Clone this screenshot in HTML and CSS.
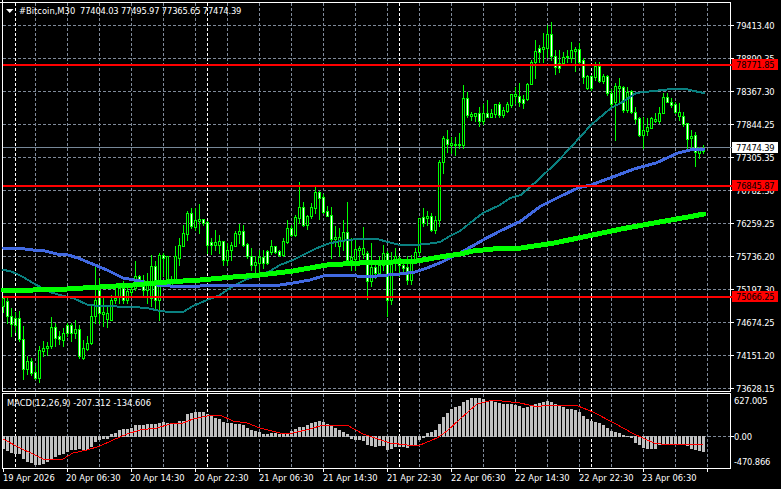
FILE: index.html
```html
<!DOCTYPE html>
<html lang="en">
<head>
<meta charset="utf-8">
<title>#Bitcoin,M30</title>
<link rel="stylesheet" href="styles.css">
</head>
<body>
<svg class="chart" width="781" height="489" viewBox="0 0 781 489" xmlns="http://www.w3.org/2000/svg">
  <g id="grid"></g>
  <path class="frame" d="M2.5 0V391.5H730.5V2.5H0M2.5 393.5H730.5V468.5H2.5Z"/>
  <path id="ticks" class="frame"></path>
  <g id="hist"></g>
  <polyline id="signal" class="signal"></polyline>
  <path class="last" d="M3 147.5H732"/>
  <g id="candles"></g>
  <polyline id="maTeal" class="ma teal"></polyline>
  <polyline id="maBlue" class="ma blue"></polyline>
  <polyline id="maLime" class="ma lime"></polyline>

  <g class="axis num">
    <text x="736" y="29">79413.40</text>
    <text x="736" y="62">78890.35</text>
    <text x="736" y="95">78367.30</text>
    <text x="736" y="128">77844.25</text>
    <text x="736" y="161">77305.35</text>
    <text x="736" y="194">76782.30</text>
    <text x="736" y="227">76259.25</text>
    <text x="736" y="260">75736.20</text>
    <text x="736" y="293">75197.30</text>
    <text x="736" y="326">74674.25</text>
    <text x="736" y="359">74151.20</text>
    <text x="736" y="392">73628.15</text>
    <text x="734" y="404">627.005</text>
    <text x="734" y="440">0.00</text>
    <text x="734" y="465">-470.866</text>
  </g>

  <path class="level" d="M3 65H732M3 186H732M3 297H732"/>
  <rect class="tag-red" x="732" y="59" width="46" height="11"/>
  <rect class="tag-red" x="732" y="180" width="46" height="11"/>
  <rect class="tag-red" x="732" y="291" width="46" height="11"/>
  <rect class="tag-white" x="732" y="142" width="46" height="11"/>
  <g class="tag-text num">
    <text x="736" y="68">78771.85</text>
    <text x="736" y="189">76845.87</text>
    <text x="736" y="300">75066.25</text>
    <text x="736" y="151">77474.39</text>
  </g>

  <g class="axis">
    <text x="3" y="481">19 Apr 2026</text>
    <text x="66" y="481">20 Apr 06:30</text>
    <text x="130" y="481">20 Apr 14:30</text>
    <text x="194" y="481">20 Apr 22:30</text>
    <text x="259" y="481">21 Apr 06:30</text>
    <text x="323" y="481">21 Apr 14:30</text>
    <text x="387" y="481">21 Apr 22:30</text>
    <text x="451" y="481">22 Apr 06:30</text>
    <text x="515" y="481">22 Apr 14:30</text>
    <text x="579" y="481">22 Apr 22:30</text>
    <text x="642" y="481">23 Apr 06:30</text>
    <text x="7" y="406">MACD(12,26,9) -207.312 -134.606</text>
    <text x="19" y="14">#Bitcoin,M30</text>
  </g>
  <g class="axis num">
    <text x="80" y="14">77404.03 77495.97 77365.65 77474.39</text>
  </g>
  <path class="arrow" d="M6 9H13.5L9.75 13Z"/>
</svg>
<script src="chart.js"></script>
</body>
</html>
```
FILE: styles.css
```css
html, body {
  margin: 0;
  padding: 0;
  background: #000;
}
.chart {
  display: block;
  background: #000;
}
.frame {
  fill: none;
  stroke: #fff;
  stroke-width: 1;
  shape-rendering: crispEdges;
}
.grid-line {
  stroke: #7f8a99;
  stroke-width: 1;
  stroke-dasharray: 3 2;
  shape-rendering: crispEdges;
}
.sep-line {
  stroke: #fff;
  stroke-width: 1;
  stroke-dasharray: 3 2;
  shape-rendering: crispEdges;
}
.bar { fill: #c0c0c0; shape-rendering: crispEdges; }
.signal { fill: none; stroke: #f00; stroke-width: 1; shape-rendering: crispEdges; }
.last { stroke: #778899; stroke-width: 1; shape-rendering: crispEdges; }
.wick, .body { fill: #0f0; shape-rendering: crispEdges; }
.in-white { fill: #fff; shape-rendering: crispEdges; }
.in-black { fill: #000; shape-rendering: crispEdges; }
.ma { fill: none; stroke-linecap: round; stroke-linejoin: round; shape-rendering: crispEdges; }
.teal { stroke: #0a8080; stroke-width: 2; }
.blue { stroke: #4169e1; stroke-width: 3; }
.lime { stroke: #0f0; stroke-width: 5; }
.level { stroke: #f00; stroke-width: 2; shape-rendering: crispEdges; fill: none; }
.tag-red { fill: #f00; shape-rendering: crispEdges; }
.tag-white { fill: #fff; shape-rendering: crispEdges; }
.axis text, .tag-text text {
  font-family: "DejaVu Sans Condensed", "DejaVu Sans", sans-serif;
  font-size: 9.3px;
}
.num text { letter-spacing: -0.18px; }
.axis text { fill: #fff; }
.tag-text text { fill: #000; }
.arrow { fill: #fff; }
```
FILE: chart.js
```js
var NS = "http://www.w3.org/2000/svg";
function el(parent, name, attrs) {
  var n = document.createElementNS(NS, name);
  for (var k in attrs) n.setAttribute(k, attrs[k]);
  parent.appendChild(n);
  return n;
}

/* grid */
var grid = document.getElementById("grid");
for (var y = 25; y <= 388; y += 33) el(grid, "line", {class: "grid-line", x1: 3, x2: 730, y1: y + 0.5, y2: y + 0.5});
el(grid, "line", {class: "grid-line", x1: 3, x2: 730, y1: 436.5, y2: 436.5});
for (var x = 35; x < 730; x += 32) {
  el(grid, "line", {class: "grid-line", x1: x + 0.5, x2: x + 0.5, y1: 3, y2: 391});
  el(grid, "line", {class: "grid-line", x1: x + 0.5, x2: x + 0.5, y1: 394, y2: 468});
}
[15, 207, 399, 591].forEach(function (x) {
  el(grid, "line", {class: "sep-line", x1: x + 0.5, x2: x + 0.5, y1: 3, y2: 391});
  el(grid, "line", {class: "sep-line", x1: x + 0.5, x2: x + 0.5, y1: 394, y2: 468});
});

/* ticks */
var t = "";
for (var x = 3; x < 730; x += 64) t += "M" + (x + 0.5) + " 468V472";
for (var y = 25; y <= 388; y += 33) t += "M731 " + (y + 0.5) + "H734";
t += "M731 436.5H734";
document.getElementById("ticks").setAttribute("d", t);

/* candles: high, body top, body bottom, low, 1 = white body */
var C = [
[296,298,306,312,0],[298,301,316,323,1],[308,316,324,336,1],[312,318,325,332,1],[311,318,339,341,1],
[326,339,369,379,1],[356,361,369,374,0],[358,361,373,375,1],[366,372,378,379,1],[346,350,378,382,0],
[341,348,351,356,0],[342,346,348,355,0],[317,327,346,348,0],[323,327,338,346,1],[331,336,339,344,1],
[328,333,340,346,0],[323,325,333,336,1],[323,325,333,341,1],[320,329,333,338,0],[325,329,356,358,1],
[340,348,358,359,0],[336,343,349,350,0],[306,316,343,344,0],[266,300,316,323,0],[278,290,313,323,1],
[296,312,314,326,0],[305,313,319,327,0],[295,300,320,320,0],[288,298,300,303,0],[283,288,296,303,0],
[281,288,300,303,1],[285,291,300,303,0],[283,289,292,296,0],[261,276,288,290,0],[275,276,281,285,1],
[275,280,290,296,1],[273,283,290,303,0],[255,266,298,306,0],[261,266,300,308,1],[253,255,300,320,0],
[253,255,258,276,1],[256,256,280,283,0],[276,280,285,287,0],[246,256,280,283,0],[238,245,258,265,0],
[225,233,246,246,0],[211,213,234,240,0],[208,213,226,228,1],[208,220,227,230,0],[204,219,221,233,0],
[219,219,223,225,1],[221,222,245,253,1],[238,242,245,254,1],[230,242,245,250,0],[235,241,245,253,0],
[241,241,260,265,1],[243,250,260,265,0],[242,245,250,260,0],[231,233,246,246,0],[224,231,234,243,0],
[225,231,245,246,1],[243,244,256,258,1],[248,256,265,270,1],[256,262,265,273,0],[250,257,263,273,0],
[250,257,263,268,1],[250,251,263,264,1],[240,246,252,254,0],[246,246,252,253,1],[250,251,255,256,1],
[238,241,255,256,0],[220,228,242,243,0],[225,228,235,236,1],[215,217,235,236,0],[182,207,218,223,0],
[202,207,225,226,1],[215,216,225,229,0],[203,207,216,218,0],[187,192,208,213,0],[191,192,198,219,1],
[194,197,212,213,1],[206,211,216,216,1],[207,215,239,258,1],[226,237,239,246,0],[228,237,246,256,0],
[220,232,241,250,0],[202,232,260,261,1],[238,257,260,270,0],[238,249,259,270,0],[246,248,250,263,0],
[227,248,254,258,0],[251,253,281,299,1],[243,267,281,286,0],[263,267,273,278,1],[256,265,273,275,0],
[245,253,265,270,0],[251,253,300,316,1],[252,260,300,304,0],[248,256,260,270,0],[256,258,265,276,1],
[261,265,268,271,1],[256,267,280,284,1],[255,260,280,284,0],[248,252,260,261,0],[218,218,252,255,0],
[208,217,223,226,1],[211,216,218,225,0],[213,216,230,231,1],[216,220,230,233,0],[160,162,220,226,0],
[136,138,162,173,0],[130,139,144,152,1],[137,143,145,153,0],[137,144,145,155,0],[133,144,145,148,0],
[85,98,145,148,0],[92,98,115,117,1],[112,114,116,120,0],[113,113,116,121,0],[107,113,121,126,1],
[104,113,121,124,0],[100,113,117,117,1],[109,113,117,117,0],[104,104,114,117,0],[102,104,115,117,1],
[107,110,115,117,0],[102,104,111,112,0],[94,94,105,107,0],[87,94,96,103,0],[83,96,102,106,1],
[95,99,103,108,1],[83,84,99,100,0],[60,62,84,84,0],[40,51,62,78,0],[45,48,52,62,1],
[33,47,49,62,0],[25,34,48,57,0],[22,34,56,60,1],[50,56,67,74,1],[50,63,68,72,1],
[52,57,63,65,0],[50,56,57,62,0],[42,50,58,62,0],[47,49,51,71,0],[43,49,62,63,1],
[58,60,77,83,1],[75,76,88,89,0],[75,76,88,90,1],[62,66,77,80,0],[62,66,81,82,1],
[74,76,81,83,0],[75,76,93,95,1],[89,93,104,106,1],[83,86,102,140,0],[78,86,88,102,0],
[86,87,110,112,1],[87,92,110,112,0],[90,91,112,113,1],[107,112,119,123,1],[117,118,135,136,1],
[117,130,135,148,0],[118,127,131,135,0],[117,118,128,128,0],[113,119,121,122,0],[107,113,121,123,0],
[93,97,113,113,0],[93,97,102,102,1],[98,102,105,107,1],[102,104,112,113,1],[103,112,116,120,0],
[112,116,124,126,1],[123,123,139,150,1],[130,136,138,150,0],[132,135,152,166,1],[147,150,153,158,0],
[145,148,151,153,0]
];
var g = document.getElementById("candles");
C.forEach(function (c, i) {
  var x = 3 + 4 * i;
  el(g, "rect", {class: "wick", x: x, y: c[0], width: 1, height: c[3] - c[0] + 1});
  el(g, "rect", {class: "body", x: x - 1, y: c[1], width: 3, height: c[2] - c[1] + 1});
  if (c[2] - c[1] > 1) el(g, "rect", {class: c[4] ? "in-white" : "in-black", x: x, y: c[1] + 1, width: 1, height: c[2] - c[1] - 1});
});

/* MACD histogram: far end of each bar, zero at y=436 */
var H = [
448,450,452,453,453,458,461,462,464,464,463,461,459,456,454,453,451,449,449,448,449,449,446,441,439,438,438,
434,433,430,429,429,428,425,425,425,424,424,424,423,422,423,423,423,421,421,414,413,412,412,412,414,415,418,
419,422,423,423,424,424,425,428,430,431,432,
434,434,433,433,434,433,433,431,429,427,427,425,423,422,421,422,424,425,428,430,432,434,
438,439,439,440,444,445,446,445,445,449,448,446,446,446,447,445,444,439,437,
433,432,430,424,417,413,409,407,406,402,400,398,398,398,399,401,401,402,403,404,404,404,405,406,
408,407,406,404,403,402,401,402,404,406,407,409,409,410,412,416,419,421,422,423,425,428,431,432,433,435,436,
437,442,444,447,448,448,448,444,443,444,443,443,443,444,445,448,449,450,451
];
var h = document.getElementById("hist");
H.forEach(function (v, i) {
  var x = 3 + 4 * i;
  var top = Math.min(v, 436), bot = Math.max(v, 436);
  var left = Math.max(x - 1, 3);
  el(h, "rect", {class: "bar", x: left, y: top, width: x + 2 - left, height: bot - top + 1});
});

function pts(id, list) { document.getElementById(id).setAttribute("points", list.map(function (p) { return p[0] + "," + p[1]; }).join(" ")); }

pts("signal", [[3,439],[20,448],[33,454],[43,459],[53,460],[63,459],[73,453],[87,450],[100,446],[113,440],[127,434],[140,430],[157,428],[170,424],[183,423],[193,419],[207,416],[220,415],[233,421],[247,423],[260,428],[280,433],[293,433],[310,429],[323,425],[347,425],[363,434],[390,443],[407,445],[420,445],[437,438],[447,431],[460,419],[477,404],[493,400],[520,403],[538,407],[545,405],[564,405],[578,406],[593,412],[614,423],[634,434],[654,443],[668,445],[688,444],[703,445]]);
pts("maTeal", [[3,270],[10,271],[17,274],[23,277],[33,283],[42,288],[50,292],[63,296],[73,298],[88,305],[100,306],[133,307],[147,308],[160,311],[170,312],[183,312],[193,306],[207,300],[220,295],[233,286],[247,279],[260,275],[270,271],[280,265],[293,260],[303,255],[315,249],[327,244],[340,241],[357,239],[377,239],[388,242],[400,245],[413,245],[427,244],[440,242],[450,236],[460,231],[470,223],[483,213],[500,205],[510,198],[521,195],[538,180],[556,163],[571,147],[591,125],[611,108],[621,103],[636,93],[654,91],[671,89],[686,89],[694,91],[704,93]]);
pts("maBlue", [[3,248],[25,249],[33,250],[45,251],[57,254],[68,255],[78,258],[90,263],[107,270],[123,278],[140,281],[157,285],[170,286],[187,287],[200,286],[220,285],[280,285],[293,283],[310,280],[323,276],[340,275],[357,276],[377,276],[400,274],[415,272],[427,268],[442,262],[460,253],[483,240],[500,231],[521,221],[541,206],[561,196],[578,188],[591,185],[618,175],[634,169],[656,163],[678,153],[694,149],[704,149]]);
pts("maLime", [[3,290],[33,290],[67,289],[100,287],[133,285],[167,282],[200,280],[233,277],[260,275],[293,271],[327,265],[360,263],[393,262],[417,261],[440,257],[460,254],[473,251],[493,249],[521,248],[554,243],[588,236],[621,229],[654,223],[688,217],[704,214]]);
```
